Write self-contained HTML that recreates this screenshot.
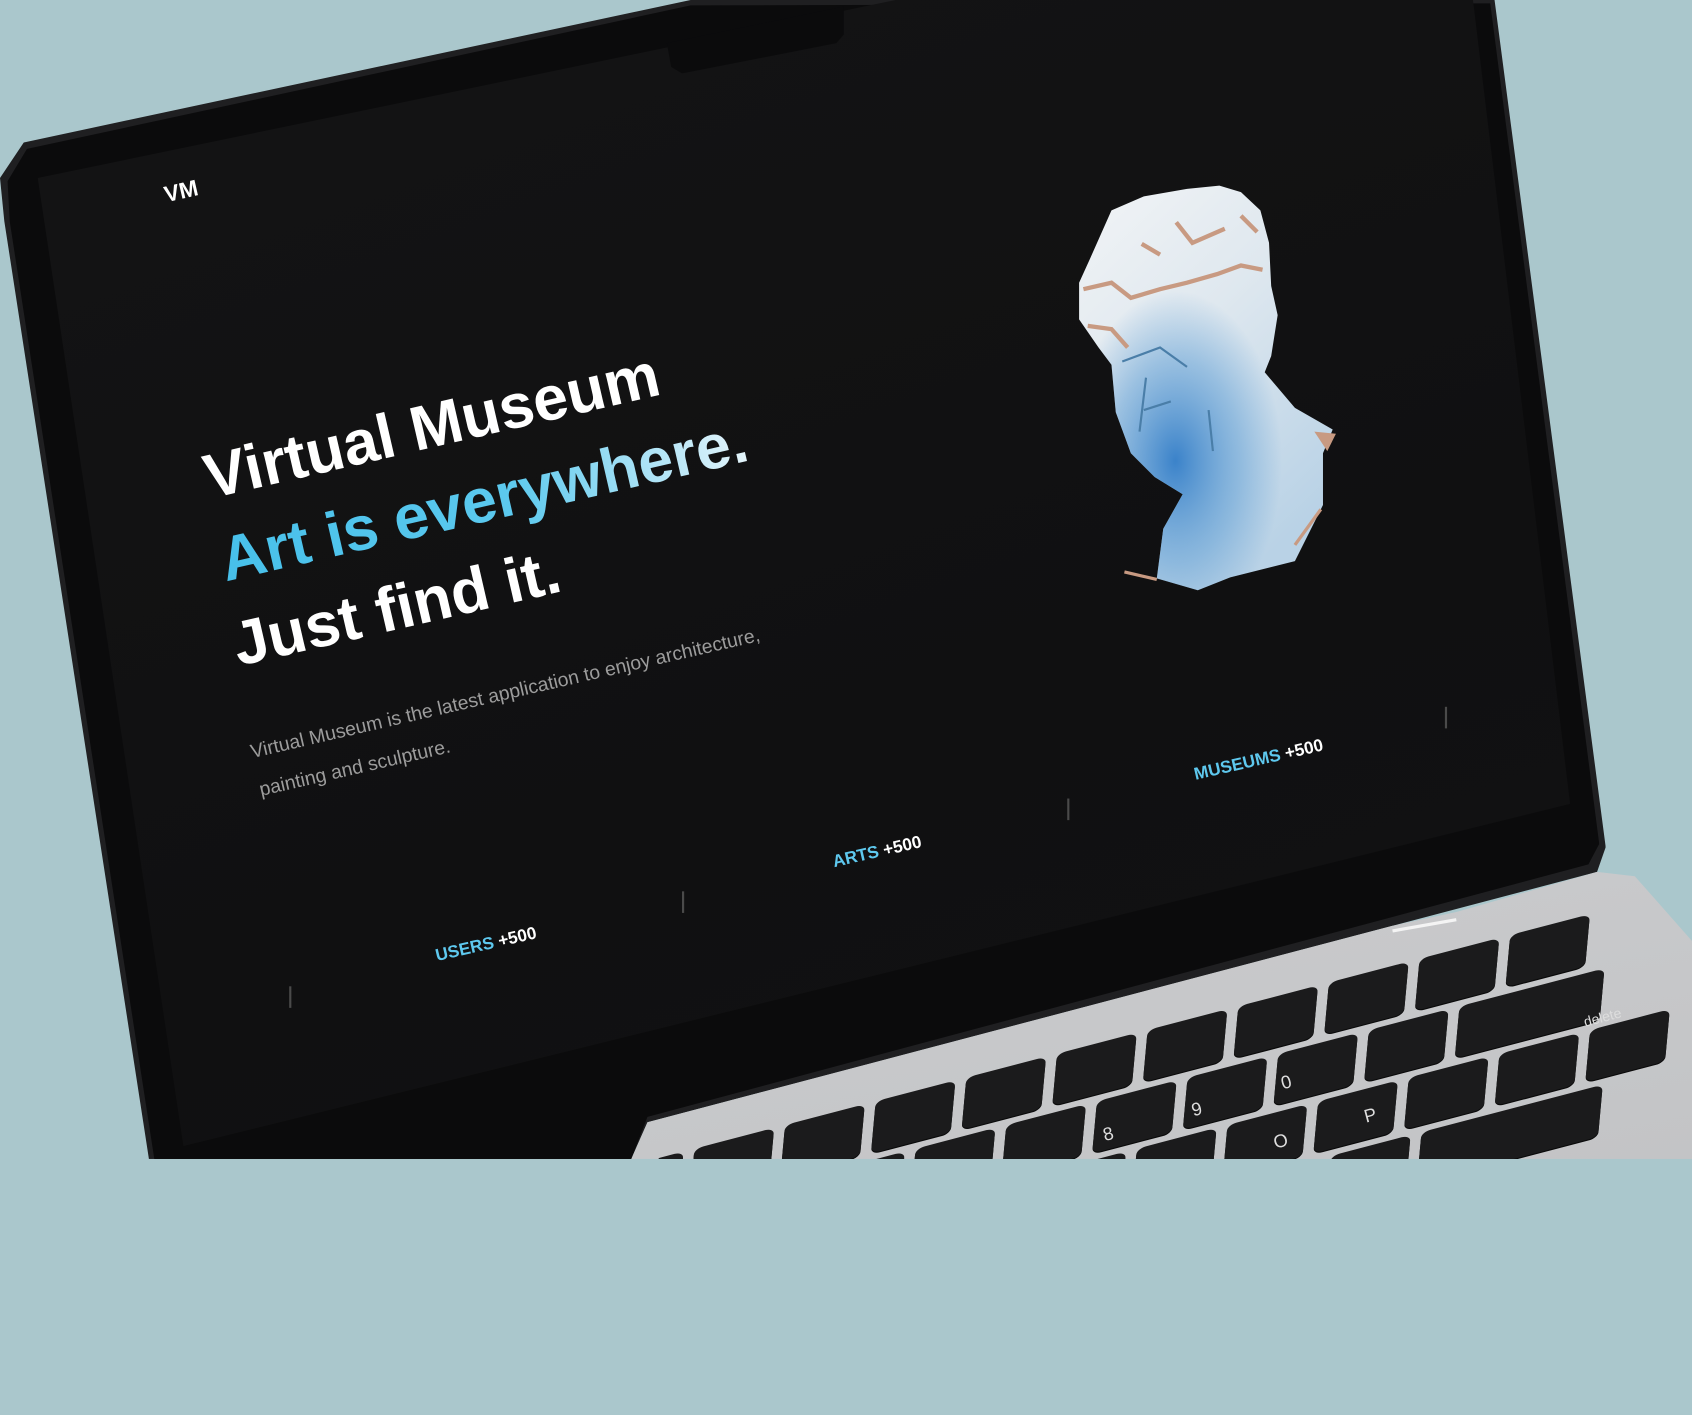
<!DOCTYPE html>
<html><head><meta charset="utf-8"><style>
html,body{margin:0;padding:0;width:1692px;height:1159px;overflow:hidden;background:#aac7cc;}
#s{position:absolute;left:0;top:0;width:1568px;height:1074px;transform:scale(1.0791);transform-origin:0 0;font-family:"Liberation Sans",sans-serif;}
.abs{position:absolute;left:0;top:0;}
.lid{width:1568px;height:1074px;background:#1f1f21;clip-path:polygon(0 165px,22px 132px,640px 0,1385px 0,1488px 785px,1480px 808px,600px 1040px,585px 1074px,138px 1074px,4px 205px);}
.lid2{width:1568px;height:1074px;background:#0b0b0c;clip-path:polygon(7px 168px,25px 138px,640px 5px,1381px 3px,1482px 782px,1472px 801px,600px 1035px,585px 1074px,143px 1074px,9px 205px);}
.disp{width:1568px;height:1074px;background:linear-gradient(160deg,#141415,#101011 60%,#121213);clip-path:polygon(35px 165px,830px 0,1365px 0,1455px 745px,170px 1062px);}
.notch{width:1568px;height:1074px;background:#0b0b0c;clip-path:polygon(618px 40px,782px 6px,782px 32px,775px 40px,632px 68px,622px 62px);}
.base{width:1568px;height:1074px;background:linear-gradient(170deg,#e4e4e6,#cfd0d2 50%,#c3c4c6);clip-path:polygon(600px 1040px,1290px 858px,1350px 845px,1480px 808px,1515px 812px,1568px 872px,1568px 1074px,585px 1074px);}
.kb{position:absolute;left:0;top:0;width:1568px;height:1074px;clip-path:polygon(640px 1040px,1300px 870px,1480px 830px,1520px 840px,1568px 900px,1568px 1074px,610px 1074px);}
.kc{position:absolute;left:0;top:0;transform-origin:0 0;transform:matrix(0.84,-0.22,-0.05,0.55,1315.5,888.5);}
.k{position:absolute;width:88px;height:88px;border-radius:10px;background:#1b1b1c;box-shadow:0 2px 0 #0a0a0a;}
.t{position:absolute;left:0;top:0;transform-origin:0 0;white-space:nowrap;color:#fff;}
.h{font-weight:bold;font-size:58px;line-height:78px;}
.grad{background:linear-gradient(90deg,#47c0ea,#5cc9ee 55%,#e6f5fb);-webkit-background-clip:text;background-clip:text;color:transparent;}
.st{font-size:16px;font-weight:bold;}
.st b{color:#5ec8ee;font-weight:bold;}
.vl{position:absolute;width:1.5px;height:20px;background:#4a4a4a;}
</style></head><body><div id="s">
<div class="abs lid"></div>
<div class="abs lid2"></div>
<div class="abs disp"></div>
<div class="abs notch"></div>

<div class="t" style="left:150px;top:170px;transform:rotate(-13deg);font-weight:bold;font-size:21px;">VM</div>

<div class="t" style="left:196px;top:468px;transform:rotate(-13deg);">
 <div class="h" style="position:absolute;left:0;top:-64px;">Virtual Museum</div>
 <div class="h grad" style="position:absolute;left:-3px;top:14px;">Art is everywhere.</div>
 <div class="h" style="position:absolute;left:-9px;top:93px;">Just find it.</div>
 <div style="position:absolute;left:-16px;top:213px;font-size:18px;line-height:36px;color:#9c9c9c;">Virtual Museum is the latest application to enjoy architecture,<br>painting and sculpture.</div>
</div>

<div class="t st" style="left:402px;top:878px;transform:rotate(-13deg);"><b>USERS</b> +500</div>
<div class="t st" style="left:770px;top:791px;transform:rotate(-13deg);"><b>ARTS</b> +500</div>
<div class="t st" style="left:1105px;top:710px;transform:rotate(-13deg);"><b>MUSEUMS</b> +500</div>
<div class="vl" style="left:268px;top:914px;"></div>
<div class="vl" style="left:632px;top:826px;"></div>
<div class="vl" style="left:989px;top:740px;"></div>
<div class="vl" style="left:1339px;top:655px;"></div>

<svg class="abs" width="1568" height="1074" viewBox="0 0 1568 1074">
<defs>
<linearGradient id="g1" x1="0" y1="0" x2="0.6" y2="1"><stop offset="0" stop-color="#f2f4f6"/><stop offset="0.45" stop-color="#dfe8ef"/><stop offset="1" stop-color="#b9d2e6"/></linearGradient>
<radialGradient id="g2" cx="0.38" cy="0.68" r="0.42"><stop offset="0" stop-color="#2a78c6" stop-opacity="0.9"/><stop offset="0.6" stop-color="#4a92d0" stop-opacity="0.45"/><stop offset="1" stop-color="#4a92d0" stop-opacity="0"/></radialGradient>
</defs>
<path d="M1030 195 L1060 182 L1100 175 L1130 172 L1150 178 L1168 195 L1176 225 L1178 265 L1184 292 L1178 330 L1172 345 L1200 378 L1235 398 L1226 420 L1226 468 L1200 520 L1140 535 L1110 547 L1072 536 L1078 490 L1096 458 L1070 442 L1048 420 L1034 382 L1030 338 L1018 322 L1000 296 L1000 262 L1010 240 Z" fill="url(#g1)"/>
<path d="M1030 195 L1060 182 L1100 175 L1130 172 L1150 178 L1168 195 L1176 225 L1178 265 L1184 292 L1178 330 L1172 345 L1200 378 L1235 398 L1226 420 L1226 468 L1200 520 L1140 535 L1110 547 L1072 536 L1078 490 L1096 458 L1070 442 L1048 420 L1034 382 L1030 338 L1018 322 L1000 296 L1000 262 L1010 240 Z" fill="url(#g2)"/>
<path d="M1004 268 L1030 262 L1048 276 L1075 268 L1100 262 L1128 254 L1150 246 L1170 250 M1008 302 L1030 305 L1045 322 M1090 206 L1105 225 L1135 212 M1058 226 L1075 236 M1150 200 L1165 215" stroke="#c89a82" stroke-width="4" fill="none"/>
<path d="M1040 335 L1075 322 L1100 340 M1062 350 L1056 400 M1120 380 L1124 418 M1060 380 L1085 372" stroke="#4a7ea8" stroke-width="2" fill="none"/>
<path d="M1218 400 L1238 402 L1230 418 Z" fill="#c89a82"/>
<path d="M1200 505 L1224 472 M1042 530 L1072 537" stroke="#c89a82" stroke-width="3" fill="none"/>
</svg>

<div class="abs base"></div>
<div style="position:absolute;left:1290px;top:856px;width:60px;height:3px;background:#f4f4f4;transform:rotate(-10deg);"></div>
<div class="kb"><div class="kc">
<div class="k" style="left:-900px;top:0"></div><div class="k" style="left:-800px;top:0"></div><div class="k" style="left:-700px;top:0"></div><div class="k" style="left:-600px;top:0"></div><div class="k" style="left:-500px;top:0"></div><div class="k" style="left:-400px;top:0"></div><div class="k" style="left:-300px;top:0"></div><div class="k" style="left:-200px;top:0"></div><div class="k" style="left:-100px;top:0"></div><div class="k" style="left:0;top:0"></div><div class="k" style="left:100px;top:0"></div>
<div class="k" style="left:-950px;top:100px"></div><div class="k" style="left:-850px;top:100px"></div><div class="k" style="left:-750px;top:100px"></div><div class="k" style="left:-650px;top:100px"></div><div class="k" style="left:-550px;top:100px"></div><div class="k" style="left:-450px;top:100px"></div><div class="k" style="left:-350px;top:100px"></div><div class="k" style="left:-250px;top:100px"></div><div class="k" style="left:-150px;top:100px"></div><div class="k" style="left:-50px;top:100px"></div><div class="k" style="left:50px;top:100px;width:160px"></div>
<div class="k" style="left:-900px;top:200px"></div><div class="k" style="left:-800px;top:200px"></div><div class="k" style="left:-700px;top:200px"></div><div class="k" style="left:-600px;top:200px"></div><div class="k" style="left:-500px;top:200px"></div><div class="k" style="left:-400px;top:200px"></div><div class="k" style="left:-300px;top:200px"></div><div class="k" style="left:-200px;top:200px"></div><div class="k" style="left:-100px;top:200px"></div><div class="k" style="left:0;top:200px"></div><div class="k" style="left:100px;top:200px"></div><div class="k" style="left:200px;top:200px"></div>
<div class="k" style="left:-880px;top:300px"></div><div class="k" style="left:-780px;top:300px"></div><div class="k" style="left:-680px;top:300px"></div><div class="k" style="left:-580px;top:300px"></div><div class="k" style="left:-480px;top:300px"></div><div class="k" style="left:-380px;top:300px"></div><div class="k" style="left:-280px;top:300px"></div><div class="k" style="left:-180px;top:300px"></div><div class="k" style="left:-80px;top:300px"></div><div class="k" style="left:20px;top:300px;width:200px"></div>
</div></div>
<div class="t" style="left:1466px;top:940px;transform:rotate(-15deg);font-size:13px;color:#ddd;">delete</div>
<div class="t" style="left:1262px;top:1026px;transform:rotate(-15deg);font-size:17px;color:#ddd;">P</div>
<div class="t" style="left:1178px;top:1050px;transform:rotate(-15deg);font-size:17px;color:#ddd;">O</div>
<div class="t" style="left:1185px;top:995px;transform:rotate(-15deg);font-size:17px;color:#ddd;">0</div>
<div class="t" style="left:1102px;top:1020px;transform:rotate(-15deg);font-size:17px;color:#ddd;">9</div>
<div class="t" style="left:1020px;top:1043px;transform:rotate(-15deg);font-size:17px;color:#ddd;">8</div>
</div></body></html>
